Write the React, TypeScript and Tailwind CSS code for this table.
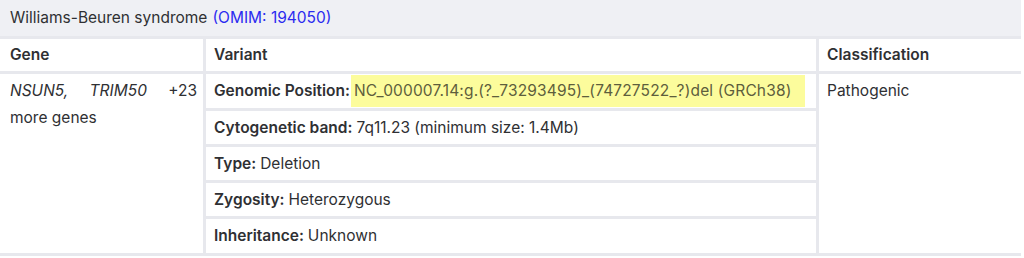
const variantRows: { label: string; value: string; highlight?: boolean; h: string }[] = [
  { label: 'Genomic Position:', value: 'NC_000007.14:g.(?_73293495)_(74727522_?)del (GRCh38)', highlight: true, h: 'h-[34px]' },
  { label: 'Cytogenetic band:', value: '7q11.23 (minimum size: 1.4Mb)', h: 'h-[33px]' },
  { label: 'Type:', value: 'Deletion', h: 'h-[33px]' },
  { label: 'Zygosity:', value: 'Heterozygous', h: 'h-[33px]' },
  { label: 'Inheritance:', value: 'Unknown', h: 'h-[34px]' },
];

export default function App() {
  return (
    <div className="w-[1024px] h-[258px] bg-white" style={{ fontFamily: 'Inter, "Noto Sans", sans-serif' }}>
      <div className="w-[1021px] bg-[#e7e8ed] pb-[3px] text-[15.5px] text-[#2f3033]">
        {/* Title band */}
        <div className="h-[36px] bg-[#eff0f4] flex items-center px-[10px] mb-[3px]">
          <span>Williams-Beuren syndrome</span>
          <span className="ml-[5px] text-[#2b2bf0]">(OMIM: 194050)</span>
        </div>

        <div className="grid grid-cols-[203px_610px_1fr] gap-[3px]">
          {/* Header row */}
          <div className="h-[32px] bg-white flex items-center px-[10px] font-semibold">Gene</div>
          <div className="h-[32px] bg-white flex items-center px-[8px] font-semibold">Variant</div>
          <div className="h-[32px] bg-white flex items-center px-[8px] font-semibold">Classification</div>

          {/* Body */}
          <div className="bg-white pl-[10px] pr-[6px] pt-[3px] leading-[27px] text-justify">
            <i>NSUN5,</i> <i>TRIM50</i> +23 more genes
          </div>
          <div className="flex flex-col gap-[3px]">
            {variantRows.map((r) => (
              <div key={r.label} className={`${r.h} bg-white flex items-stretch pl-[8px]`}>
                <span className="font-semibold self-center">{r.label}</span>
                {r.highlight ? (
                  <span className="ml-[1px] my-[1px] pl-[3px] pr-[14px] bg-[#fcfc9c] text-[#5e5e3c] tracking-[0.15px] flex items-center">
                    {r.value}
                  </span>
                ) : (
                  <span className="ml-[4px] self-center">{r.value}</span>
                )}
              </div>
            ))}
          </div>
          <div className="bg-white px-[8px] pt-[3px] leading-[27px]">Pathogenic</div>
        </div>
      </div>
    </div>
  );
}
